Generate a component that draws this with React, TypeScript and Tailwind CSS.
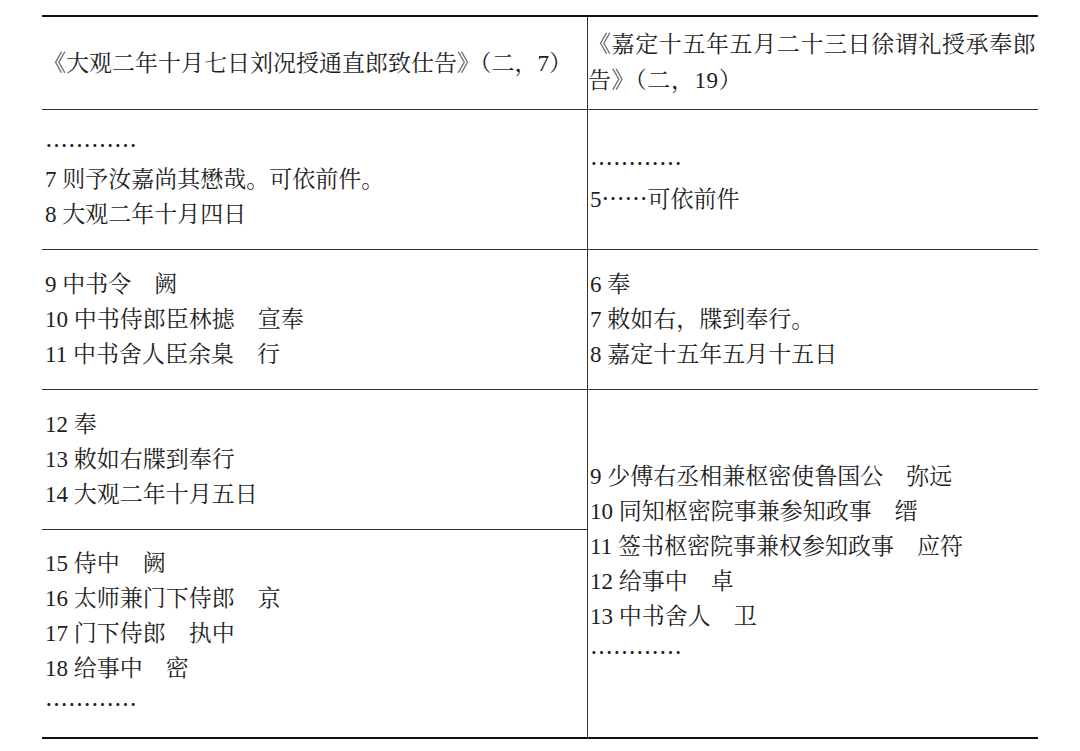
import React from "react";

const E = ({ children }: { children: React.ReactNode }) => (
  <span className="font-['Noto_Sans_CJK_SC',sans-serif]">{children}</span>
);

const Cell = ({
  children,
  className = "",
}: {
  children: React.ReactNode;
  className?: string;
}) => (
  <div className={"flex flex-col justify-center border-[#333] " + className}>
    {children}
  </div>
);

const L = ({ children }: { children: React.ReactNode }) => (
  <div className="h-[35px] leading-[35px] whitespace-nowrap">{children}</div>
);

export default function App() {
  return (
    <div
      lang="zh-CN"
      className="w-[1080px] h-[751px] bg-white overflow-hidden pt-[15px] pl-[42px] text-[23px] text-[#1e1e1e] font-['Liberation_Serif','Noto_Serif_CJK_SC','Noto_Sans_CJK_SC',serif]"
    >
      <div className="w-[996px] border-t-2 border-b-2 border-[#111]">
        <div className="grid grid-cols-[546px_450px] grid-rows-[93px_140px_140px_140px_207px]">
          {/* header */}
          <Cell className="col-start-1 row-start-1 border-b border-r pl-[1px]">
            <L>《大观二年十月七日刘况授通直郎致仕告》（二，7）</L>
          </Cell>
          <Cell className="col-start-2 row-start-1 border-b pl-0">
            <div className="leading-[36px] whitespace-nowrap tracking-[0.6px]">
              《嘉定十五年五月二十三日徐谓礼授承奉郎
              <br />
              告》（二，19）
            </div>
          </Cell>

          {/* row 2 */}
          <Cell className="col-start-1 row-start-2 border-b border-r pl-[3px]">
            <L>
              <E>…………</E>
            </L>
            <L>7 则予汝嘉尚其懋哉。可依前件。</L>
            <L>8 大观二年十月四日</L>
          </Cell>
          <Cell className="col-start-2 row-start-2 border-b pl-[2px]">
            <L>
              <E>…………</E>
            </L>
            <L>
              5<E>……</E>可依前件
            </L>
          </Cell>

          {/* row 3 */}
          <Cell className="col-start-1 row-start-3 border-b border-r pl-[3px]">
            <L>9 中书令　阙</L>
            <L>10 中书侍郎臣林摅　宣奉</L>
            <L>11 中书舍人臣余臬　行</L>
          </Cell>
          <Cell className="col-start-2 row-start-3 border-b pl-[2px]">
            <L>6 奉</L>
            <L>7 敕如右，牒到奉行。</L>
            <L>8 嘉定十五年五月十五日</L>
          </Cell>

          {/* row 4 */}
          <Cell className="col-start-1 row-start-4 border-b border-r pl-[3px]">
            <L>12 奉</L>
            <L>13 敕如右牒到奉行</L>
            <L>14 大观二年十月五日</L>
          </Cell>
          <Cell className="col-start-2 row-start-4 row-span-2 pl-[2px]">
            <L>9 少傅右丞相兼枢密使鲁国公　弥远</L>
            <L>10 同知枢密院事兼参知政事　缙</L>
            <L>11 签书枢密院事兼权参知政事　应符</L>
            <L>12 给事中　卓</L>
            <L>13 中书舍人　卫</L>
            <L>
              <E>…………</E>
            </L>
          </Cell>

          {/* row 5 */}
          <Cell className="col-start-1 row-start-5 border-r pl-[3px]">
            <L>15 侍中　阙</L>
            <L>16 太师兼门下侍郎　京</L>
            <L>17 门下侍郎　执中</L>
            <L>18 给事中　密</L>
            <L>
              <E>…………</E>
            </L>
          </Cell>
        </div>
      </div>
    </div>
  );
}
